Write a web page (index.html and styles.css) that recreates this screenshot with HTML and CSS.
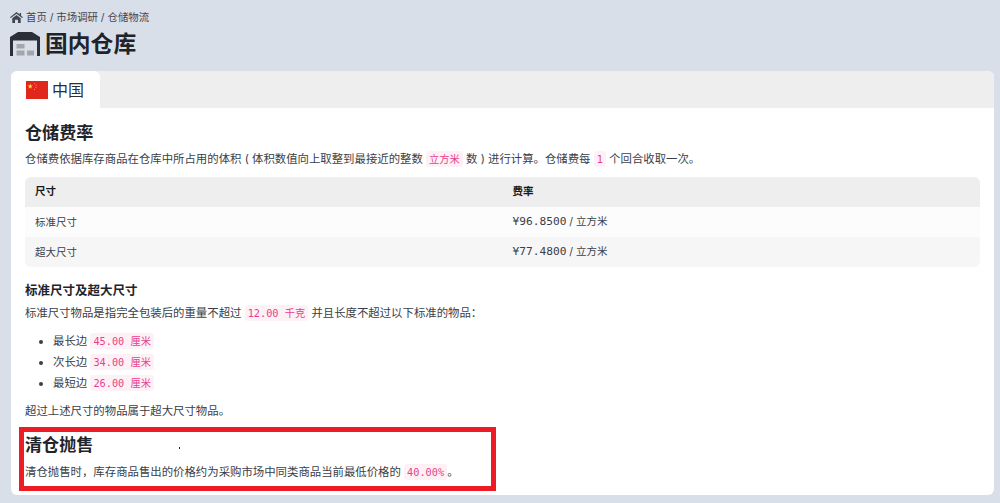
FILE: index.html
```html
<!DOCTYPE html>
<html lang="zh-CN">
<head>
<meta charset="utf-8">
<title>国内仓库</title>
<link rel="stylesheet" href="styles.css">
</head>
<body>
<header class="page-head">
  <nav class="crumbs">
    <svg class="home-icon" viewBox="0 0 14 12" width="13" height="11"><path fill="#3f4650" d="M7 0 0 5.6l.8 1L7 1.8l6.2 4.8.8-1-2-1.6V1h-1.6v1.8z"/><path fill="#3f4650" d="M7 3.2 2.4 6.8V12h3V8.4h3.2V12h3V6.8z"/></svg>
    <span>首页 / 市场调研 / 仓储物流</span>
  </nav>
  <h1 class="title">
    <svg class="wh-icon" viewBox="0 0 30 24" width="30" height="24"><path fill="#2b3038" d="M8 0h14l8 5v19h-3V8.5H3V24H0V5z"/><rect fill="#a3a7ad" x="6.5" y="12" width="8" height="4.5"/><rect fill="#a3a7ad" x="6.5" y="18.5" width="8" height="5"/><rect fill="#a3a7ad" x="17" y="18.5" width="7" height="5"/></svg>
    <span>国内仓库</span>
  </h1>
</header>
<main class="card">
  <div class="tabs">
    <div class="tab">
      <svg class="flag" viewBox="0 0 22 18" width="22" height="18"><rect width="22" height="18" fill="#e1261c"/><path fill="#ffd83a" d="M4.2 2.6l.7 1.9 2 .1-1.6 1.2.5 1.9-1.6-1.1-1.6 1.1.5-1.9L1.5 4.6l2-.1z"/><circle cx="8.5" cy="2.5" r=".6" fill="#f0a030"/><circle cx="10" cy="4.2" r=".6" fill="#f0a030"/><circle cx="10" cy="6.5" r=".6" fill="#f0a030"/><circle cx="8.5" cy="8.4" r=".6" fill="#f0a030"/></svg>
      <span>中国</span>
    </div>
  </div>
  <div class="body">
    <h2 class="h2">仓储费率</h2>
    <p class="para para-first">仓储费依据库存商品在仓库中所占用的体积 ( 体积数值向上取整到最接近的整数 <code class="tag">立方米</code> 数 ) 进行计算。仓储费每 <code class="tag">1</code> 个回合收取一次。</p>
    <table class="rates">
      <thead><tr><th>尺寸</th><th>费率</th></tr></thead>
      <tbody>
        <tr><td>标准尺寸</td><td><span class="money">¥96.8500</span> / 立方米</td></tr>
        <tr class="alt"><td>超大尺寸</td><td><span class="money">¥77.4800</span> / 立方米</td></tr>
      </tbody>
    </table>
    <h3 class="h3">标准尺寸及超大尺寸</h3>
    <p class="para">标准尺寸物品是指完全包装后的重量不超过 <code class="tag">12.00 千克</code> 并且长度不超过以下标准的物品：</p>
    <ul class="list">
      <li>最长边 <code class="tag">45.00 厘米</code></li>
      <li>次长边 <code class="tag">34.00 厘米</code></li>
      <li>最短边 <code class="tag">26.00 厘米</code></li>
    </ul>
    <p class="para para-after">超过上述尺寸的物品属于超大尺寸物品。</p>
    <h2 class="h2 h2-second">清仓抛售</h2>
    <p class="para para-last">清仓抛售时，库存商品售出的价格约为采购市场中同类商品当前最低价格的 <code class="tag">40.00%</code>。</p>
  </div>
</main>
<div class="highlight"></div>
<div class="speck"></div>
</body>
</html>
```
FILE: styles.css
```css
* { box-sizing: border-box; }
html, body { height: 100%; }
body {
  margin: 0;
  height: 503px;
  overflow: hidden;
  background: #d9dfe8;
  color: #3a4047;
  font-family: "Inter", "Noto Sans CJK SC", sans-serif;
  font-size: 11.4px;
  line-height: 1.5;
  position: relative;
}
.page-head { padding: 9px 10px 0; height: 71px; }
.crumbs { display: flex; align-items: center; gap: 3px; height: 17px; color: #3f4650; font-size: 10.4px; }
.title { display: flex; align-items: center; gap: 5px; margin: 2px 0 0; font-size: 22.8px; line-height: 32px; font-weight: 700; color: #1f242b; }
.card {
  margin: 0 6px 0 11px;
  height: 424px;
  background: #fff;
  border-radius: 6px;
  overflow: hidden;
}
.tabs { height: 37px; background: #eeeeee; display: flex; }
.tab { width: 89px; background: #fff; border-radius: 6px 6px 0 0; display: flex; align-items: center; gap: 4px; padding-left: 15px; font-size: 16px; color: #2a3038; }
.body { padding: 12px 14px 0; }
.h2 { margin: 0; font-size: 17.1px; line-height: 25px; font-weight: 700; color: #1f242b; }
.h2-second { margin-top: 10px; }
.h3 { margin: 15px 0 0; font-size: 12.5px; line-height: 17px; font-weight: 700; color: #1f242b; }
.para { margin: 3px 0 0; line-height: 21px; }
.para-first { margin-top: 4px; }
.h3 + .para { margin-top: 4px; }
.para-after { margin-top: 7px; }
.para-last { margin-top: 5px; }
.tag {
  font-family: "DejaVu Sans Mono", "Noto Sans CJK SC", monospace;
  font-size: 10.26px;
  color: #e83e8c;
  background: #fdf1f6;
  border-radius: 3px;
  padding: 2px 3px;
}
.rates { width: 100%; margin-top: 7px; border-collapse: separate; border-spacing: 0; table-layout: fixed; }
.rates th, .rates td { height: 30px; padding: 0 10px; text-align: left; font-size: 10.5px; color: #3a4047; }
.rates td { padding-top: 1px; }
.rates th { background: #eeeeee; color: #1a1a1a; font-weight: 700; }
.rates th:first-child { border-top-left-radius: 6px; }
.rates th:last-child { border-top-right-radius: 6px; }
.rates td { background: #fcfcfc; }
.rates .alt td { background: #f6f6f6; }
.rates .alt td:first-child { border-bottom-left-radius: 6px; }
.rates .alt td:last-child { border-bottom-right-radius: 6px; }
.money { font-family: "DejaVu Sans Mono", monospace; font-size: 11.2px; }
.list { margin: 7px 0 0; padding: 0 0 0 28px; }
.list li { line-height: 21px; }
.highlight { position: absolute; left: 19px; top: 427px; width: 477px; height: 64px; border: 5px solid #ed1c24; }
.speck { position: absolute; left: 179px; top: 447px; width: 1px; height: 2px; background: #222; }
```
